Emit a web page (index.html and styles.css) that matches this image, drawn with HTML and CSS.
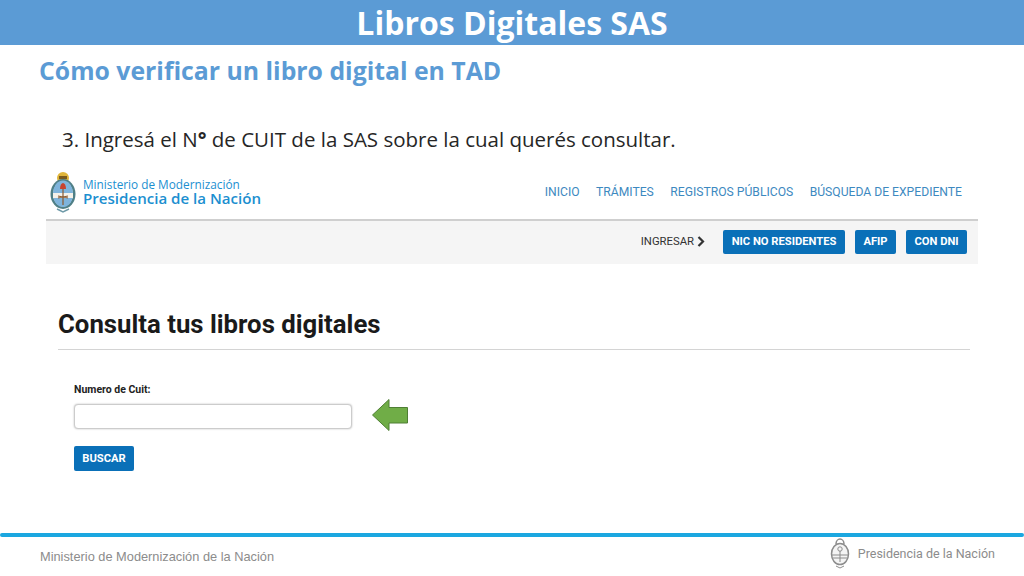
FILE: index.html
```html
<!DOCTYPE html>
<html lang="es">
<head>
<meta charset="utf-8">
<title>Libros Digitales SAS</title>
<link rel="stylesheet" href="styles.css">
</head>
<body>
<div class="slide">
  <header class="title-bar"><h1>Libros Digitales SAS</h1></header>
  <h2 class="subtitle">Cómo verificar un libro digital en TAD</h2>
  <p class="step">3. Ingresá el N<b class="deg">°</b> de CUIT de la SAS sobre la cual querés consultar.</p>
  <section class="shot">
    <div class="site-top">
      <div class="brand">
        <svg class="shield" width="26" height="42" viewBox="0 0 26 42">
          <circle cx="13" cy="7" r="6" fill="#e0b53a"/>
          <path d="M9 5h8v3H9z" fill="#7a5a1c"/>
          <ellipse cx="13" cy="23" rx="12.500" ry="15" fill="#4f7f86"/>
          <ellipse cx="13" cy="23" rx="10" ry="12.500" fill="#fff"/>
          <path d="M3 22a10 12.500 0 0 1 20 0z" fill="#7fb4dc"/>
          <path d="M3.400 27h19.200a10 12.500 0 0 1-19.200 0z" fill="#7fb4dc"/>
          <path d="M3 22h20v5H3z" fill="#f4f1ea"/>
          <path d="M10 18c0-4 1.500-6 3-6s3 2 3 6z" fill="#c8432f"/>
          <path d="M13 18v16M8 27l10-2M8 25l10 2" stroke="#8a5a30" stroke-width="1.200"/>
          <path d="M7 38l6 3 6-3" fill="none" stroke="#6f9aa8" stroke-width="1.500"/>
        </svg>
        <div class="brand-text">
          <div class="brand-small">Ministerio de Modernización</div>
          <div class="brand-big">Presidencia de la Nación</div>
        </div>
      </div>
      <nav class="nav">
        <span>INICIO</span><span>TRÁMITES</span><span>REGISTROS PÚBLICOS</span><span>BÚSQUEDA DE EXPEDIENTE</span>
      </nav>
    </div>
    <div class="login-bar">
      <span class="login">INGRESAR
        <svg width="8" height="11" viewBox="0 0 8 11"><path d="M1.500 1l4.500 4.500-4.500 4.500" fill="none" stroke="#333" stroke-width="2.200"/></svg>
      </span>
      <span class="btn btn-nic">NIC NO RESIDENTES</span>
      <span class="btn btn-afip">AFIP</span>
      <span class="btn btn-dni">CON DNI</span>
    </div>
    <div class="content">
      <h3 class="page-title">Consulta tus libros digitales</h3>
      <label class="field-label">Numero de Cuit:</label>
      <div class="input-row">
        <div class="input"></div>
        <svg class="arrow" width="38" height="34" viewBox="0 0 38 34">
          <path d="M1.500 17L18 1.500V9.500H36.500V25H18V32.500z" fill="#70ad47" stroke="#4f7f34" stroke-width="1"/>
        </svg>
      </div>
      <span class="btn btn-search">BUSCAR</span>
    </div>
  </section>
  <footer class="footer">
    <div class="rule"></div>
    <div class="foot-row">
      <span class="foot-left">Ministerio de Modernización de la Nación</span>
      <span class="foot-right">
        <svg width="20" height="32" viewBox="0 0 20 32">
          <path d="M6 7c0-3 2-5 4-5s4 2 4 5" fill="none" stroke="#8c8c8c" stroke-width="1.500"/>
          <ellipse cx="10" cy="17" rx="8.500" ry="10.500" fill="#f4f4f4" stroke="#8c8c8c" stroke-width="1.500"/>
          <path d="M2 18h16M2.500 21h15" stroke="#8c8c8c"/>
          <circle cx="10" cy="12" r="2.200" fill="none" stroke="#8c8c8c"/>
          <path d="M10 14v11M6 29l4 2 4-2" fill="none" stroke="#8c8c8c"/>
        </svg>
        Presidencia de la Nación
      </span>
    </div>
  </footer>
</div>
</body>
</html>
```
FILE: styles.css
```css
* { box-sizing: border-box; }
html, body { margin: 0; padding: 0; }
body { background: #fff; font-family: "Open Sans", sans-serif; }
.slide { width: 1024px; height: 576px; overflow: hidden; display: flex; flex-direction: column; }
.title-bar { height: 45px; background: #5b9bd5; display: flex; justify-content: center; align-items: center; flex: none; }
.title-bar h1 { margin: 0; font-size: 32px; line-height: 45px; font-weight: 700; color: #fff; }
.subtitle { margin: 7px 0 0 39px; font-size: 24.800px; line-height: 36px; font-weight: 700; color: #5b9bd5; }
.step { margin: 37px 0 0 62px; font-size: 20.500px; line-height: 28px; color: #262626; }
.deg { font-weight: 700; }
.shot { margin: 17px 46px 0 46px; width: 932px; font-family: Roboto, sans-serif; flex: none; }
.site-top { height: 51px; display: flex; justify-content: space-between; align-items: center; border-bottom: 2px solid #cfcfcf; padding: 0 16px 5px 4px; }
.brand { display: flex; align-items: center; gap: 7px; }
.shield { flex: none; }
.brand-text { color: #1c8fd0; font-family: "Open Sans", sans-serif; }
.brand-small { font-size: 11.800px; line-height: 13px; }
.brand-big { font-size: 15.100px; line-height: 15px; font-weight: 600; }
.nav { display: flex; gap: 16.500px; font-size: 12.150px; color: #3d89c0; }
.login-bar { height: 43px; background: #f5f5f5; display: flex; justify-content: flex-end; align-items: center; padding: 0 11px 2px 0; }
.login { font-size: 11.300px; color: #333; margin-right: 18px; display: flex; align-items: center; gap: 3px; }
.btn { display: flex; align-items: center; justify-content: center; background: #0a70b8; color: #fff; font-size: 11.200px; font-weight: 700; border-radius: 2px; height: 24px; }
.btn-nic { width: 122px; }
.btn-afip { width: 41px; margin-left: 10px; }
.btn-dni { width: 61px; margin-left: 10px; }
.content { padding: 43px 8px 0 12px; }
.page-title { margin: 0; font-size: 25.750px; line-height: 34px; font-weight: 700; color: #1a1a1a; border-bottom: 1px solid #d4d4d4; height: 43px; }
.field-label { display: block; margin: 33px 0 0 16px; font-size: 10.500px; line-height: 14px; font-weight: 700; color: #222; }
.input-row { display: flex; align-items: center; margin: 2px 0 0 16px; height: 34px; }
.input { width: 278px; height: 25px; border: 1px solid #cccccc; border-radius: 4px; box-shadow: 0 0 2px #bbb; background: #fff; }
.arrow { margin: 0 0 3px 19px; flex: none; }
.btn-search { width: 60px; height: 25px; margin: 13px 0 0 16px; }
.footer { margin-top: auto; padding-bottom: 4px; }
.rule { height: 4px; width: 1024px; background: #1ba7e0; border-radius: 2px; }
.foot-row { height: 35px; display: flex; justify-content: space-between; align-items: center; padding: 0 29px 0 40px; }
.foot-left { font-family: "Liberation Sans", sans-serif; font-size: 12.800px; color: #8c8c8c; margin-top: 4px; }
.foot-right { font-family: Roboto, sans-serif; font-size: 12.500px; color: #8c8c8c; display: flex; align-items: center; gap: 8px; margin-bottom: 3px; }
```
